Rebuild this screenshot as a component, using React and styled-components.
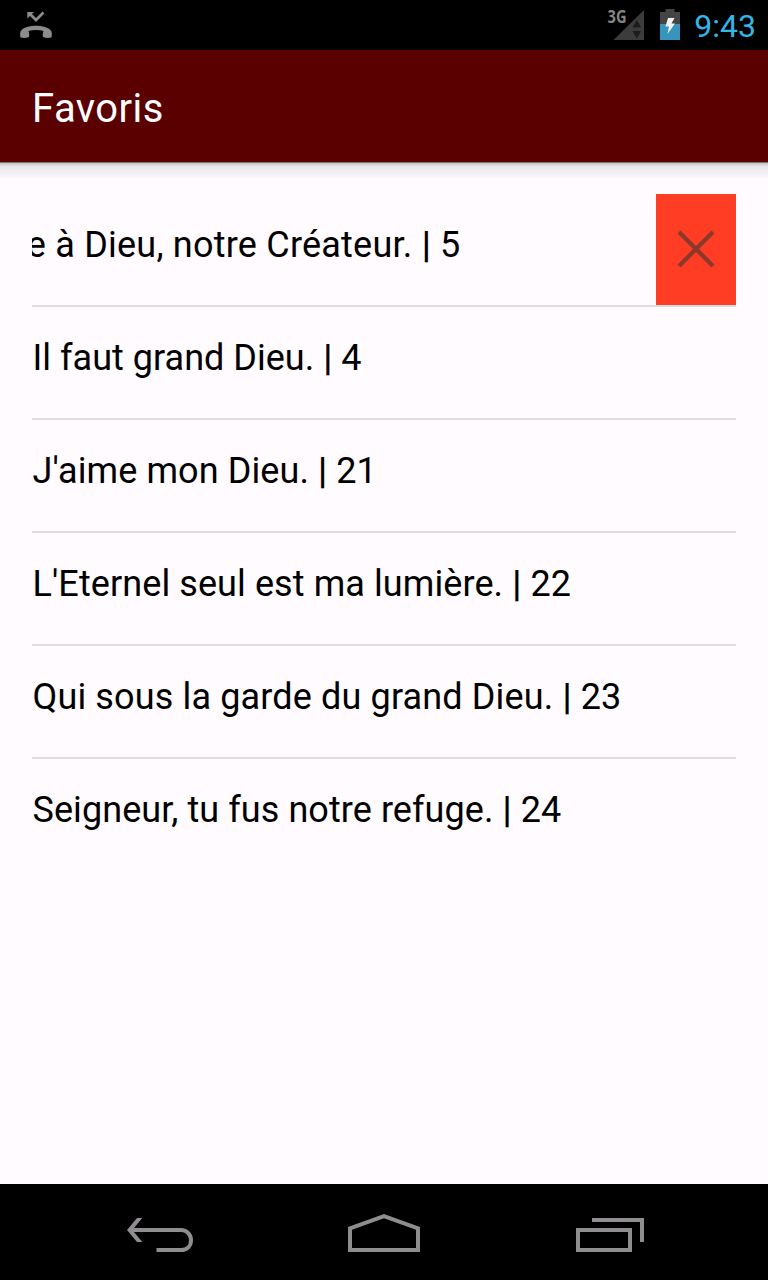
import React from 'react'
import styled, { createGlobalStyle } from 'styled-components'

const GlobalStyle = createGlobalStyle`
  * {
    box-sizing: border-box;
  }
  body {
    margin: 0;
    background-color: #fffbff;
    font-family: Roboto, "Liberation Sans", sans-serif;
  }
`

const Screen = styled.div`
  width: 768px;
  height: 1280px;
  display: flex;
  flex-direction: column;
  overflow: hidden;
  background-color: #fffbff;
`

const StatusBar = styled.div`
  height: 50px;
  flex-shrink: 0;
  display: flex;
  justify-content: space-between;
  background-color: #000000;
  padding: 0 12px 0 16px;
`

const StatusIcons = styled.div`
  display: flex;
  align-items: center;
`

const Clock = styled.span`
  color: #33b5e5;
  font-size: 32px;
  line-height: 50px;
  padding-top: 1px;
  height: 50px;
`

const Header = styled.header`
  height: 112px;
  flex-shrink: 0;
  display: flex;
  align-items: center;
  padding: 6px 32px 0;
  background-color: #5a0000;
`

const Title = styled.h1`
  margin: 0;
  color: #ffffff;
  font-size: 40px;
  font-weight: 400;
  line-height: 48px;
  letter-spacing: 0.45px;
`

const Shadow = styled.div`
  height: 16px;
  flex-shrink: 0;
  background: linear-gradient(
    to bottom,
    #7b7879 0,
    #7b7879 1px,
    #c5c2c4 1px,
    #dcdadc 3px,
    #e9e7e9 5px,
    #f0eef0 9px,
    #fbf7fb 16px
  );
`

const List = styled.ul`
  flex: 1;
  margin: 0;
  padding: 16px 32px 0;
  list-style: none;
`

const Row = styled.li`
  height: 113px;
  display: flex;
  align-items: stretch;
  border-bottom: 2px solid ${(props) => (props.$last ? 'transparent' : '#e0dde0')};
`

const Label = styled.div`
  flex: 1;
  overflow: hidden;
  white-space: nowrap;
  color: #000000;
  font-size: 36px;
  line-height: 42px;
  padding-top: 30px;
  text-indent: ${(props) => props.$shift}px;
  letter-spacing: ${(props) => props.$spacing}px;
`

const Separator = styled.b`
  font-weight: 700;
`

const DeleteButton = styled.button`
  width: 80px;
  padding: 0 0 1px;
  border: none;
  display: flex;
  justify-content: center;
  align-items: center;
  background-color: #ff3d24;
`

const NavBar = styled.nav`
  height: 96px;
  flex-shrink: 0;
  display: flex;
  justify-content: center;
  gap: 124px;
  background-color: #000000;
`

const NavIcon = styled.svg`
  width: 100px;
  height: 96px;
  fill: none;
  stroke: #8f8d8f;
  stroke-width: 4;
`

const songs = [
  { title: 'e à Dieu, notre Créateur.', number: 5, open: true, spacing: 0.22 },
  { title: 'Il faut grand Dieu.', number: 4, spacing: 0.02 },
  { title: "J'aime mon Dieu.", number: 21, spacing: 0.1 },
  { title: "L'Eternel seul est ma lumière.", number: 22, spacing: 0.09 },
  { title: 'Qui sous la garde du grand Dieu.', number: 23, spacing: 0.14 },
  { title: 'Seigneur, tu fus notre refuge.', number: 24, spacing: 0.07 },
]

const MissedCallIcon = () => (
  <svg width="40" height="50" viewBox="16 0 40 50">
    <path d="M43.5 12.5 L36 20 L30 14" fill="none" stroke="#8c8c8c" strokeWidth="2.8" />
    <path d="M27.3 12 H34 L27.3 18.6 Z" fill="#8c8c8c" />
    <path
      d="M20.5 37.5 C19.8 34 20 31.5 21.5 30 C25 26.8 31 25.8 36 25.8 C41 25.8 47 26.8 50.5 30 C52 31.5 52.2 34 51.5 37.5 C48.5 38.3 45.5 38 43 37 C42.6 35 42.6 33 43.5 31 C39 29.6 33 29.6 28.5 31 C29.4 33 29.4 35 29 37 C26.5 38 23.5 38.3 20.5 37.5 Z"
      fill="#8c8c8c"
    />
  </svg>
)

const NetworkText = styled.text`
  font-family: "Open Sans", sans-serif;
  font-size: 17.5px;
  font-weight: 700;
  fill: #858585;
`

const SignalIcon = () => (
  <svg width="48" height="50" viewBox="604 0 48 50">
    <path d="M644 10 V40 H613.5 Z" fill="#3c3c3c" />
    <path d="M636.8 20 L641.2 27.5 H632.4 Z M632.4 31 H641.2 L636.8 38.5 Z" fill="#1c1c1c" />
    <NetworkText x="607.5" y="23" textLength="19" lengthAdjust="spacingAndGlyphs">3G</NetworkText>
  </svg>
)

const BatteryIcon = () => (
  <svg width="42" height="50" viewBox="652 0 42 50">
    <path d="M665.5 9 H674.5 V12 H680 V24 H660 V12 H665.5 Z" fill="#444444" />
    <path d="M660 24 H680 V40 H660 Z" fill="#3795bd" />
    <path d="M668 18 H674.5 L671.5 23.5 H675 L667.5 34 L669 26.5 H665.5 Z" fill="#f2f2f2" />
  </svg>
)

const CloseIcon = () => (
  <svg width="40" height="40" viewBox="0 0 40 40">
    <path d="M3 3 L37 37 M37 3 L3 37" stroke="#8a3a2b" strokeWidth="4.2" />
  </svg>
)

const App = () => {
  return (
    <>
      <GlobalStyle />
      <Screen>
        <StatusBar>
          <StatusIcons>
            <MissedCallIcon />
          </StatusIcons>
          <StatusIcons>
            <SignalIcon />
            <BatteryIcon />
            <Clock>9:43</Clock>
          </StatusIcons>
        </StatusBar>
        <Header>
          <Title>Favoris</Title>
        </Header>
        <Shadow />
        <List>
          {songs.map((song, index) => (
            <Row key={song.number} $last={index === songs.length - 1}>
              <Label $shift={song.open ? -5.2 : 0.5} $spacing={song.spacing}>
                {song.title} <Separator>|</Separator> {song.number}
              </Label>
              {song.open && (
                <DeleteButton aria-label="Supprimer">
                  <CloseIcon />
                </DeleteButton>
              )}
            </Row>
          ))}
        </List>
        <NavBar>
          {/* back */}
          <NavIcon viewBox="110 1184 100 96">
            <path d="M129 1230 H181 C187 1230 191 1235 191 1240 C191 1246 187 1250 181 1250 H156.5" />
            <path d="M127 1230 L137 1218 H142.3 L132.3 1230 L142.3 1242 H137 Z" fill="#8f8d8f" stroke="none" />
          </NavIcon>
          {/* home */}
          <NavIcon viewBox="334 1184 100 96">
            <path d="M350 1250 V1228.4 L384 1216.2 L418 1228.4 V1250 Z" />
          </NavIcon>
          {/* recent apps */}
          <NavIcon viewBox="558 1184 100 96">
            <path d="M578 1230 H630 V1250 H578 Z M592 1220 H642 V1242" />
          </NavIcon>
        </NavBar>
      </Screen>
    </>
  )
}

export default App
